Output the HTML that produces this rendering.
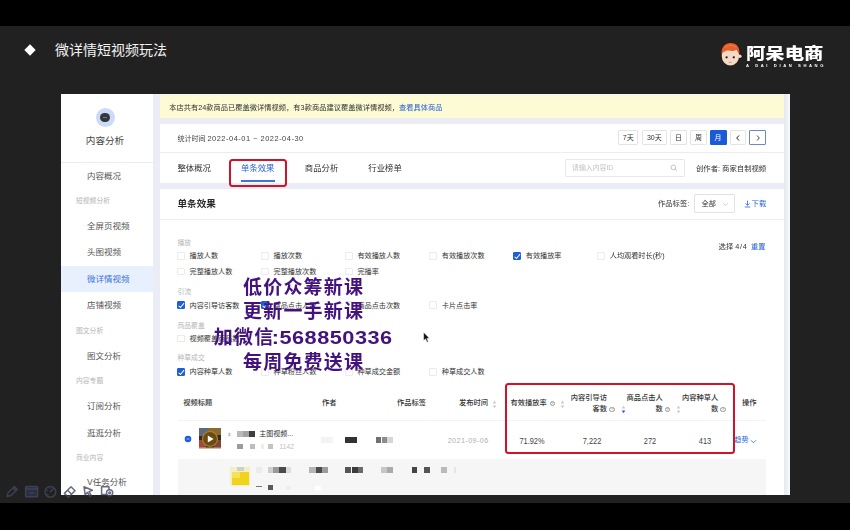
<!DOCTYPE html>
<html lang="zh-CN">
<head>
<meta charset="utf-8">
<title>微详情短视频玩法</title>
<style>
*{margin:0;padding:0;box-sizing:border-box}
html,body{width:850px;height:530px;overflow:hidden;background:#000}
body{font-family:"Liberation Sans","Noto Sans CJK SC",sans-serif;color:#333;position:relative}
#stage{position:absolute;left:0;top:0;width:850px;height:530px;background:#000;overflow:hidden}
.abs{position:absolute}
.t{position:absolute;white-space:nowrap;line-height:1;transform:translateY(-50%)}
.tr{position:absolute;white-space:nowrap;line-height:1;transform:translate(-100%,-50%)}
.tc{position:absolute;white-space:nowrap;line-height:1;transform:translate(-50%,-50%)}
#band{left:0;top:26px;width:850px;height:477px;background:#212121}
#panel{left:61px;top:94px;width:729px;height:401.3px;background:#ebecf5;overflow:hidden}
/* inside panel, coordinates are page coords minus (61,94): use wrapper shift */
#pin{position:absolute;left:-61px;top:-94px;width:850px;height:530px;filter:blur(0.6px)}
.white{background:#fff}
.f7{font-size:7px}
.f8{font-size:8.4px}
.side{font-size:8.5px;color:#555}
.lab{font-size:6.8px;color:#b5b5b5}
.blue{color:#2a63d8}
.cb{position:absolute;width:7.6px;height:7.6px;border:0.6px solid #ebebeb;border-radius:1px;background:#fff}
.cb.on{background:#1f5fd6;border-color:#1f5fd6}
.cb.on:after{content:"";position:absolute;left:2.1px;top:0.2px;width:2.3px;height:4.5px;border:solid #fff;border-width:0 1px 1px 0;transform:rotate(40deg)}
.ck{font-size:7.15px;color:#333}
.btn{position:absolute;top:130px;height:15px;border:0.7px solid #e4e4e4;border-radius:1px;background:#fff;font-size:7px;color:#333;text-align:center;line-height:14px}
.blk{position:absolute;filter:blur(0.6px)}
.wm{position:absolute;left:303px;white-space:nowrap;line-height:1;transform:translate(-50%,-50%);font-family:"Liberation Sans","Noto Sans CJK SC",sans-serif;font-weight:700;font-size:19px;letter-spacing:1.2px;color:#43127f;padding-left:1.2px;filter:blur(0.35px)}
.wm span{display:inline-block;letter-spacing:0.45px;transform:scaleX(1.143);transform-origin:0 50%;margin-left:-3.3px;margin-right:16.3px}
.num{position:absolute;white-space:nowrap;line-height:1;transform:translate(-50%,-50%) scale(0.86,1);font-size:8.6px;color:#444}
.th{font-size:7.25px;color:#333;font-weight:500}
.hq{position:absolute;width:5.4px;height:5.4px;border:0.6px solid #999;border-radius:50%;}
</style>
</head>
<body>
<div id="stage">
<div id="band" class="abs"></div>

<!-- slide title -->
<div class="abs" style="left:25.5px;top:45.5px;width:8px;height:8px;background:#fff;transform:rotate(45deg)"></div>
<div class="t" style="left:55px;top:50px;font-size:14px;color:#f2f2f2">微详情短视频玩法</div>

<!-- logo -->
<svg class="abs" style="left:719.8px;top:41.3px;filter:blur(0.3px)" width="24" height="27" viewBox="0 0 24 27">
  <ellipse cx="10.6" cy="13.4" rx="9.8" ry="11.8" fill="#2a1a14"/>
  <circle cx="20" cy="15.2" r="2.5" fill="#2a1a14"/>
  <circle cx="19.8" cy="15.2" r="1.8" fill="#f3d6c2"/>
  <ellipse cx="10.4" cy="15.1" rx="8.7" ry="9.3" fill="#f5dac8"/>
  <path d="M1.6 13.2 C1 6.5 5 2 10.6 2 C16.4 2 19.8 6 19.4 12.4 C18 11.6 17.2 10 16.6 8.4 C14.6 10 11.6 10.2 8.8 9.6 C6.4 9.2 3.6 10.4 1.6 13.2Z" fill="#e8612c"/>
  <path d="M5 6.4 C7.5 4 13 3.6 16 6" stroke="#f07a3a" stroke-width="1.2" fill="none"/>
  <circle cx="6.6" cy="16.3" r="1.15" fill="#2a1a14"/>
  <circle cx="13.8" cy="16.3" r="1.15" fill="#2a1a14"/>
  <path d="M8.6 21.2 Q10.2 22 11.8 21.2" stroke="#d98d80" stroke-width="0.9" fill="none"/>
</svg>
<div class="abs" style="left:745.6px;top:46.3px;transform-origin:0 0;transform:scale(1.235,1);font-size:15.7px;font-weight:900;color:#fff;font-family:'Liberation Sans','Noto Sans CJK SC',sans-serif;white-space:nowrap;line-height:1">阿呆电商</div>
<div class="abs" style="left:746.3px;top:62.8px;width:400px;height:20px;transform-origin:0 0;transform:scale(0.25)"><div style="font-size:16.5px;font-weight:700;color:#fff;white-space:nowrap;line-height:1;letter-spacing:10.4px">A DAI DIAN SHANG</div></div>

<!-- panel -->
<div id="panel" class="abs"><div id="pin">

<!-- sidebar -->
<div class="abs white" style="left:61px;top:94px;width:92px;height:401px"></div>
<div class="abs" style="left:95.5px;top:108px;width:19px;height:19px;border-radius:50%;background:#cbdaf6"></div>
<div class="abs" style="left:100.4px;top:112.9px;width:9.2px;height:9.2px;border-radius:50%;background:#33363d"></div>
<div class="abs" style="left:102.8px;top:117px;width:4.4px;height:0.8px;background:#777"></div>
<div class="tc" style="left:105px;top:141px;font-size:9.6px;color:#444">内容分析</div>
<div class="abs" style="left:61px;top:162px;width:92px;height:0.7px;background:#ececec"></div>
<div class="t side" style="left:87px;top:176.0px">内容概况</div>
<div class="t lab" style="left:76px;top:201px">短视频分析</div>
<div class="t side" style="left:87px;top:226.0px">全屏页视频</div>
<div class="t side" style="left:87px;top:252.0px">头图视频</div>
<div class="abs" style="left:61px;top:266px;width:92px;height:26px;background:#e9f0fd"></div>
<div class="t side" style="left:87px;top:279.0px;color:#3a74e0">微详情视频</div>
<div class="t side" style="left:87px;top:305.0px">店铺视频</div>
<div class="t lab" style="left:76px;top:330.5px">图文分析</div>
<div class="t side" style="left:87px;top:355.5px">图文分析</div>
<div class="t lab" style="left:76px;top:380.7px">内容专题</div>
<div class="t side" style="left:87px;top:406.0px">订阅分析</div>
<div class="t side" style="left:87px;top:432.5px">逛逛分析</div>
<div class="t lab" style="left:76px;top:458px">商业内容</div>
<div class="t side" style="left:87px;top:481.9px">V任务分析</div>

<!-- banner -->
<div class="abs" style="left:159.5px;top:94px;width:624.5px;height:23.5px;background:#fcfbd3"></div><div class="abs" style="left:159.5px;top:94px;width:624.5px;height:1.6px;background:#f7f7e6"></div>
<div class="t" style="left:169.3px;top:108.2px;font-size:7.25px;color:#333">本店共有24款商品已覆盖微详情视频，有3款商品建议覆盖微详情视频，<span class="blue">查看具体商品</span></div>

<!-- card 1 -->
<div class="abs white" style="left:159.5px;top:123.5px;width:624.5px;height:59.6px"></div>
<div class="abs" style="left:159.5px;top:152px;width:624.5px;height:0.7px;background:#ededed"></div>
<div class="t" style="left:177.5px;top:139px;font-size:7px;color:#444">统计时间 <span style="font-size:7.4px;letter-spacing:0.53px">2022-04-01 ~ 2022-04-30</span></div>
<div class="btn" style="left:618.2px;width:20px">7天</div>
<div class="btn" style="left:641.8px;width:25px">30天</div>
<div class="btn" style="left:670px;width:16.8px">日</div>
<div class="btn" style="left:690.2px;width:16.8px">周</div>
<div class="btn" style="left:709.5px;width:17px;background:#1a5ad8;border-color:#1a5ad8;color:#fff">月</div>
<div class="btn" style="left:730px;width:15.8px"></div>
<div class="btn" style="left:749px;width:17px;border:1px solid #6b86cf"></div>
<svg class="abs" style="left:734px;top:133.5px" width="8" height="8" viewBox="0 0 8 8"><path d="M5 1.5 L2.7 4 L5 6.5" fill="none" stroke="#222" stroke-width="1"/></svg>
<svg class="abs" style="left:753.5px;top:133.5px" width="8" height="8" viewBox="0 0 8 8"><path d="M3 1.5 L5.3 4 L3 6.5" fill="none" stroke="#444" stroke-width="1"/></svg>

<div class="t f8" style="left:177.5px;top:168.3px;color:#333">整体概况</div>
<div class="t f8" style="left:241px;top:168.3px;color:#2a63d8">单条效果</div>
<div class="t f8" style="left:304.8px;top:168.3px;color:#333">商品分析</div>
<div class="t f8" style="left:368.3px;top:168.3px;color:#333">行业榜单</div>
<div class="abs" style="left:241px;top:180.3px;width:33.6px;height:2px;background:#3f74de"></div>

<div class="abs" style="left:564.7px;top:158.5px;width:120px;height:18.3px;border:0.7px solid #e8e8e8;border-radius:1px;background:#fff"></div>
<div class="t" style="left:572px;top:167.8px;font-size:6.9px;color:#c2c2c2">请输入内容ID</div>
<svg class="abs" style="left:670px;top:164px" width="8" height="8" viewBox="0 0 8 8"><circle cx="3.4" cy="3.4" r="2.3" fill="none" stroke="#aaa" stroke-width="0.7"/><path d="M5.1 5.1 L7 7" stroke="#aaa" stroke-width="0.7"/></svg>
<div class="t" style="left:696px;top:168.8px;font-size:7.35px;color:#333">创作者: 商家自制视频</div>

<!-- card 2 -->
<div class="abs white" style="left:159.5px;top:188.7px;width:624.5px;height:310px"></div>
<div class="abs" style="left:159.5px;top:219.3px;width:624.5px;height:0.7px;background:#ececec"></div>
<div class="t" style="left:177.5px;top:204px;font-size:9.6px;font-weight:700;color:#2a2a2a">单条效果</div>
<div class="t" style="left:658px;top:204.2px;font-size:7.3px;color:#333">作品标签:</div>
<div class="abs" style="left:694px;top:194.4px;width:40.7px;height:18.6px;border:0.7px solid #e2e2e2;border-radius:1px;background:#fff"></div>
<div class="t" style="left:701.5px;top:204.2px;font-size:7.2px;color:#333">全部</div>
<svg class="abs" style="left:722px;top:200.5px" width="7" height="7" viewBox="0 0 7 7"><path d="M1.2 2.4 L3.5 4.6 L5.8 2.4" fill="none" stroke="#bbb" stroke-width="0.7"/></svg>
<svg class="abs" style="left:744px;top:200.4px" width="7" height="8" viewBox="0 0 7 8"><path d="M3.5 0.6 V5.2 M1.5 3.4 L3.5 5.4 L5.5 3.4 M0.8 7 H6.2" fill="none" stroke="#2a63d8" stroke-width="0.8"/></svg><div class="t blue" style="left:751.6px;top:204.2px;font-size:7.4px">下载</div>

<!-- metric checkboxes -->
<div class="t lab" style="left:177.5px;top:243.4px">播放</div>
<div class="cb" style="left:177.1px;top:252.1px"></div><div class="t ck" style="left:189.5px;top:257.4px">播放人数</div>
<div class="cb" style="left:261.1px;top:252.1px"></div><div class="t ck" style="left:273.5px;top:257.4px">播放次数</div>
<div class="cb" style="left:345.0px;top:252.1px"></div><div class="t ck" style="left:357.4px;top:257.4px">有效播放人数</div>
<div class="cb" style="left:429.4px;top:252.1px"></div><div class="t ck" style="left:441.8px;top:257.4px">有效播放次数</div>
<div class="cb on" style="left:513.4px;top:252.1px"></div><div class="t ck" style="left:525.8px;top:257.4px">有效播放率</div>
<div class="cb" style="left:597.4px;top:252.1px"></div><div class="t ck" style="left:609.8px;top:257.4px">人均观看时长(秒)</div>
<div class="cb" style="left:177.1px;top:267.8px"></div><div class="t ck" style="left:189.5px;top:273.1px">完整播放人数</div>
<div class="cb" style="left:261.1px;top:267.8px"></div><div class="t ck" style="left:273.5px;top:273.1px">完整播放次数</div>
<div class="cb" style="left:345.0px;top:267.8px"></div><div class="t ck" style="left:357.4px;top:273.1px">完播率</div>
<div class="t lab" style="left:177.5px;top:292px">引流</div>
<div class="cb on" style="left:177.1px;top:301.3px"></div><div class="t ck" style="left:189.5px;top:306.6px">内容引导访客数</div>
<div class="cb on" style="left:261.1px;top:301.3px"></div><div class="t ck" style="left:273.5px;top:306.6px">商品点击人数</div>
<div class="cb" style="left:345.0px;top:301.3px"></div><div class="t ck" style="left:357.4px;top:306.6px">商品点击次数</div>
<div class="cb" style="left:429.4px;top:301.3px"></div><div class="t ck" style="left:441.8px;top:306.6px">卡片点击率</div>
<div class="t lab" style="left:177.5px;top:325.9px">商品覆盖</div>
<div class="cb" style="left:177.1px;top:334.6px"></div><div class="t ck" style="left:189.5px;top:339.9px">视频覆盖商品数</div>
<div class="t lab" style="left:177.5px;top:358.4px">种草成交</div>
<div class="cb on" style="left:177.1px;top:368.1px"></div><div class="t ck" style="left:189.5px;top:373.4px">内容种草人数</div>
<div class="cb" style="left:261.1px;top:368.1px"></div><div class="t ck" style="left:273.5px;top:373.4px">种草粉丝人数</div>
<div class="cb" style="left:345.0px;top:368.1px"></div><div class="t ck" style="left:357.4px;top:373.4px">种草成交金额</div>
<div class="cb" style="left:429.4px;top:368.1px"></div><div class="t ck" style="left:441.8px;top:373.4px">种草成交人数</div>
<div class="t" style="left:718.6px;top:246.6px;font-size:7.3px;color:#333">选择 <span style="letter-spacing:0.7px">4/4</span> <span class="blue" style="margin-left:1.5px">重置</span></div>

<!-- table -->
<div class="t th" style="left:183.3px;top:403.3px">视频标题</div>
<div class="t th" style="left:322px;top:403.4px">作者</div>
<div class="t th" style="left:397px;top:403.4px">作品标签</div>
<div class="t th" style="left:458.9px;top:403.4px">发布时间</div>
<svg class="abs" style="left:491.5px;top:399.5px" width="5" height="9" viewBox="0 0 5 9"><path d="M2.5 0.8 L4.3 3.4 H0.7Z" fill="#c9c9c9"/><path d="M2.5 8.2 L4.3 5.6 H0.7Z" fill="#c9c9c9"/></svg>
<div class="t th" style="left:510.4px;top:403.4px">有效播放率</div>
<div class="hq" style="left:549.5px;top:401.1px"></div><div class="tc" style="left:552.2px;top:403.9px;font-size:4px;color:#888">?</div>
<svg class="abs" style="left:559.5px;top:399.5px" width="5" height="9" viewBox="0 0 5 9"><path d="M2.5 0.8 L4.3 3.4 H0.7Z" fill="#c9c9c9"/><path d="M2.5 8.2 L4.3 5.6 H0.7Z" fill="#c9c9c9"/></svg>
<div class="tr th" style="left:607px;top:398.2px">内容引导访</div><div class="tr th" style="left:607px;top:409.4px">客数</div>
<div class="hq" style="left:609.3px;top:406.90000000000003px"></div><div class="tc" style="left:612px;top:409.70000000000005px;font-size:4px;color:#888">?</div>
<svg class="abs" style="left:620.9px;top:405.1px" width="5" height="9" viewBox="0 0 5 9"><path d="M2.5 0.8 L4.3 3.4 H0.7Z" fill="#c9c9c9"/><path d="M2.5 8.2 L4.3 5.6 H0.7Z" fill="#2a63d8"/></svg>
<div class="tr th" style="left:662.8px;top:398.2px">商品点击人</div><div class="tr th" style="left:662.8px;top:409.4px">数</div>
<div class="hq" style="left:664.5999999999999px;top:406.90000000000003px"></div><div class="tc" style="left:667.3px;top:409.70000000000005px;font-size:4px;color:#888">?</div>
<svg class="abs" style="left:675.5px;top:405.1px" width="5" height="9" viewBox="0 0 5 9"><path d="M2.5 0.8 L4.3 3.4 H0.7Z" fill="#c9c9c9"/><path d="M2.5 8.2 L4.3 5.6 H0.7Z" fill="#c9c9c9"/></svg>
<div class="tr th" style="left:718.3px;top:398.2px">内容种草人</div><div class="tr th" style="left:718.3px;top:409.4px">数</div>
<div class="hq" style="left:720.3px;top:406.90000000000003px"></div><div class="tc" style="left:723px;top:409.70000000000005px;font-size:4px;color:#888">?</div>
<div class="t th" style="left:741.9px;top:403.4px">操作</div>
<div class="abs" style="left:177.5px;top:419.8px;width:588.5px;height:0.7px;background:#f4f4f4"></div>
<svg class="abs" style="left:184.4px;top:434.8px" width="8" height="8" viewBox="0 0 8 8"><circle cx="4" cy="4" r="3.3" fill="#1f5fd6"/><path d="M2.6 4 H5.4" stroke="#bcd0f7" stroke-width="0.8"/></svg>
<svg class="abs" style="left:198.6px;top:427.9px;filter:blur(0.4px)" width="22.2" height="21.4" viewBox="0 0 22.2 21.4">
<rect width="22.2" height="21.4" fill="#3a2a22"/>
<rect x="0" y="0" width="9" height="8" fill="#5d6a78"/>
<rect x="9" y="0" width="13.2" height="7" fill="#8a6a30"/>
<rect x="0" y="12" width="7" height="8" fill="#a3483a"/>
<rect x="15" y="12" width="7.2" height="8" fill="#7c4638"/>
<rect x="0" y="19.6" width="22.2" height="1.8" fill="#cdbfae"/>
<circle cx="11" cy="10.9" r="8" fill="#b08428"/>
<circle cx="11" cy="10.9" r="6.9" fill="#6b4a12"/>
<path d="M8.8 7.4 L14.6 10.9 L8.8 14.4Z" fill="#fff"/>
</svg>
<div class="t" style="left:227px;top:433.5px;font-size:5px;color:#777">ㅊ</div>
<div class="blk" style="left:237.3px;top:431.3px;width:5.7px;height:5.5px;background:#b9b9b9"></div>
<div class="blk" style="left:243px;top:431.3px;width:6px;height:5.5px;background:#a2a2a2"></div>
<div class="blk" style="left:249px;top:431.3px;width:6.2px;height:5.5px;background:#3e3e3e"></div>
<div class="t" style="left:259.3px;top:433.2px;font-size:7px;color:#333">主图视频...</div>
<div class="blk" style="left:237.3px;top:443.5px;width:6.1px;height:5.3px;background:#9b9b9b"></div>
<div class="blk" style="left:249.5px;top:443.5px;width:5.3px;height:5.3px;background:#bdbdbd"></div>
<div class="blk" style="left:261px;top:443.5px;width:3px;height:5.3px;background:#ededed"></div>
<div class="blk" style="left:267.9px;top:443.5px;width:5.3px;height:5.3px;background:#c3c3c3"></div>
<div class="t" style="left:279.5px;top:447.3px;font-size:6.7px;color:#bdbdbd;letter-spacing:0px">1142</div>
<div class="blk" style="left:321px;top:437.4px;width:12px;height:5.2px;background:#f3f3f3"></div>
<div class="blk" style="left:345.3px;top:437.4px;width:11.9px;height:5.2px;background:#333"></div>
<div class="blk" style="left:375.6px;top:437.4px;width:5.9px;height:5.2px;background:#707070"></div>
<div class="blk" style="left:381.5px;top:437.4px;width:5.9px;height:5.2px;background:#8d8d8d"></div>
<div class="blk" style="left:387.4px;top:437.4px;width:5.9px;height:5.2px;background:#d6d6d6"></div>
<div class="t" style="left:447.7px;top:440.7px;font-size:7.2px;color:#b0b0b0;letter-spacing:0.42px">2021-09-06</div>
<div class="num" style="left:532.2px;top:441.2px">71.92%</div>
<div class="num" style="left:591.7px;top:441.2px">7,222</div>
<div class="num" style="left:650.3px;top:441.2px">272</div>
<div class="num" style="left:705px;top:441.2px">413</div>
<div class="t blue" style="left:734.3px;top:440.7px;font-size:7.1px">趋势</div>
<svg class="abs" style="left:749.5px;top:437.6px" width="7" height="7" viewBox="0 0 7 7"><path d="M1 2.3 L3.5 4.8 L6 2.3" fill="none" stroke="#2a63d8" stroke-width="0.8"/></svg>
<div class="abs" style="left:177.5px;top:458.8px;width:588.5px;height:40px;background:#f6f6f7"></div>
<div class="abs" style="left:230.4px;top:466.6px;width:19.2px;height:19.6px;background:#f3efc4;border-radius:1px;filter:blur(0.5px)"></div><div class="abs" style="left:236.8px;top:466.8px;width:7px;height:4.2px;background:#cfcfc4;filter:blur(0.6px)"></div>
<div class="abs" style="left:231.6px;top:472px;width:17px;height:13px;background:#f1d31c;filter:blur(0.5px)"></div>
<div class="abs" style="left:231.6px;top:472px;width:8px;height:6px;background:#f6e055;filter:blur(0.5px)"></div>
<div class="blk" style="left:256px;top:467px;width:6px;height:5.7px;background:#ececec"></div>
<div class="blk" style="left:267.9px;top:467px;width:5.1px;height:5.7px;background:#cfcfcf"></div>
<div class="blk" style="left:273px;top:467px;width:5.6px;height:5.7px;background:#9a9a9a"></div>
<div class="blk" style="left:278.6px;top:467px;width:7.0px;height:5.7px;background:#4a4a4a"></div>
<div class="blk" style="left:285.6px;top:467px;width:5.4px;height:5.7px;background:#dcdcdc"></div>
<div class="blk" style="left:309px;top:467px;width:6.5px;height:5.7px;background:#b5b5b5"></div>
<div class="blk" style="left:315.5px;top:467px;width:6.5px;height:5.7px;background:#4c4c4c"></div>
<div class="blk" style="left:322px;top:467px;width:5.5px;height:5.7px;background:#9c9c9c"></div>
<div class="blk" style="left:345.3px;top:467px;width:6.2px;height:5.7px;background:#555"></div>
<div class="blk" style="left:351.5px;top:467px;width:6.0px;height:5.7px;background:#3c3c3c"></div>
<div class="blk" style="left:357.5px;top:467px;width:5.8px;height:5.7px;background:#6a6a6a"></div>
<div class="blk" style="left:381px;top:467px;width:6px;height:5.7px;background:#c6c6c6"></div>
<div class="blk" style="left:387px;top:467px;width:6.3px;height:5.7px;background:#a9a9a9"></div>
<div class="blk" style="left:411.7px;top:467px;width:5.6px;height:5.7px;background:#444"></div>
<div class="blk" style="left:423.5px;top:467px;width:6.0px;height:5.7px;background:#555"></div>
<div class="blk" style="left:441px;top:467px;width:6px;height:5.7px;background:#bbb"></div>
<div class="blk" style="left:454px;top:467px;width:2px;height:5.7px;background:#e6e6e6"></div>
<div class="blk" style="left:255.7px;top:485.5px;width:6.3px;height:1.5px;background:#777"></div>
<div class="blk" style="left:267.9px;top:484.8px;width:5.3px;height:5.4px;background:#5a5a5a"></div>
<div class="blk" style="left:286px;top:486px;width:5px;height:4.2px;background:#eee"></div>
<div class="blk" style="left:315px;top:486px;width:6px;height:4.2px;background:#fff"></div>
<div class="abs" style="left:784px;top:94px;width:6px;height:401px;background:linear-gradient(90deg,#e6e8f1 0,#eceef5 45%,#f8f9fc 100%)"></div>
</div></div>

<!-- highlights -->
<div class="abs" style="left:228.8px;top:158.8px;width:58.2px;height:28.6px;border:2.6px solid #d0122a;border-radius:3.5px"></div>
<div class="abs" style="left:505.2px;top:383px;width:229.4px;height:70.6px;border:2.6px solid #d0122a;border-radius:3.5px"></div>

<!-- watermark -->
<div class="wm" style="top:286.6px">低价众筹新课</div>
<div class="wm" style="top:311.1px">更新一手新课</div>
<div class="wm" style="top:336.7px">加微信<span>:568850336</span></div>
<div class="wm" style="top:362.1px">每周免费送课</div>

<!-- cursor -->
<svg class="abs" style="left:422px;top:331px" width="9" height="13" viewBox="0 0 9 13"><path d="M1.6 1.2 L1.6 9.6 L3.6 7.9 L5 11.2 L6.3 10.6 L4.9 7.4 L7.4 7.2Z" fill="#111" stroke="#fff" stroke-width="0.5"/></svg>

<!-- toolbar -->
<svg class="abs" style="left:4px;top:481.5px;filter:blur(0.45px)" width="114" height="18" viewBox="0 0 114 18" fill="none" stroke="#42475f" stroke-opacity="0.8" stroke-width="1.5" stroke-linecap="round" stroke-linejoin="round">
<path d="M3.2 14.4 L4 10.8 L10.4 4.6 L13.2 7.4 L6.8 13.6Z M9.2 6 L11.8 8.6"/>
<rect x="21.6" y="4.4" width="12" height="10.4" rx="0.8" fill="#2b2f41"/><path d="M21.6 7 H33.6 M26 11 H29.6" stroke-width="1.5"/>
<circle cx="46.4" cy="9.8" r="5.4"/><path d="M46.4 9.8 L49.4 6.8 M43 8.4 L43.1 8.5 M46 6 L46 6.1 M43.8 12.4 L43.9 12.4" stroke-width="1.5"/>
<path d="M60.4 11.4 L67 4.8 L71 8.8 L64.4 15.4 Z M63.6 8.2 L67.6 12.2" />
<path d="M80 4.8 L88.4 8.2 L85 9.6 L87.4 13.6 L85.8 14.4 L83.4 10.4 L81.2 12.8Z"/>
<path d="M97.6 12.6 V4.8 H105 V7 M97.6 12.6 H101.6"/><circle cx="105.6" cy="10.8" r="3.1"/><circle cx="105.6" cy="10.8" r="0.9" stroke-width="1.4"/>
</svg>

</div>
</body>
</html>
